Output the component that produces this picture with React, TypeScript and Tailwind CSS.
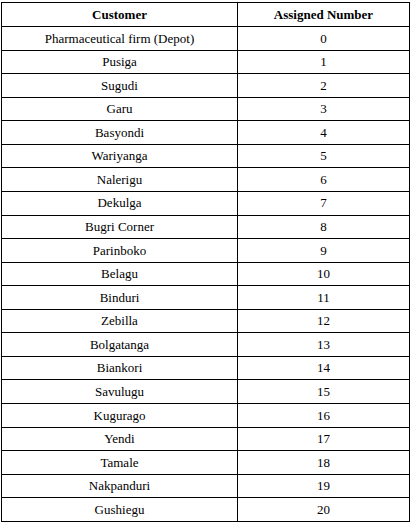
const ROWS: [string, number][] = [
  ['Pharmaceutical firm (Depot)', 0],
  ['Pusiga', 1],
  ['Sugudi', 2],
  ['Garu', 3],
  ['Basyondi', 4],
  ['Wariyanga', 5],
  ['Nalerigu', 6],
  ['Dekulga', 7],
  ['Bugri Corner', 8],
  ['Parinboko', 9],
  ['Belagu', 10],
  ['Binduri', 11],
  ['Zebilla', 12],
  ['Bolgatanga', 13],
  ['Biankori', 14],
  ['Savulugu', 15],
  ['Kugurago', 16],
  ['Yendi', 17],
  ['Tamale', 18],
  ['Nakpanduri', 19],
  ['Gushiegu', 20],
];

const serif = { fontFamily: '"Liberation Serif"' };

function Cell({ children, head, h }: { children: React.ReactNode; head?: boolean; h: string }) {
  return (
    <div className={`${h} flex items-center justify-center border-r border-b border-black`}>
      <span style={serif} className={head ? 'font-bold text-[13px] text-black' : 'text-[13px] text-black'}>
        {children}
      </span>
    </div>
  );
}

export default function App() {
  return (
    <div className="w-[411px] h-[523px] bg-white pt-[2px] pl-[1px]">
      <div className="w-[409px] grid grid-cols-[236px_172px] border-l border-t border-black">
        <Cell head h="h-[24px]">Customer</Cell>
        <Cell head h="h-[24px]">Assigned Number</Cell>
        {ROWS.map(([name, num]) => [
          <Cell key={`n${num}`} h="h-[23.57px]">{name}</Cell>,
          <Cell key={`v${num}`} h="h-[23.57px]">{num}</Cell>,
        ])}
      </div>
    </div>
  );
}
